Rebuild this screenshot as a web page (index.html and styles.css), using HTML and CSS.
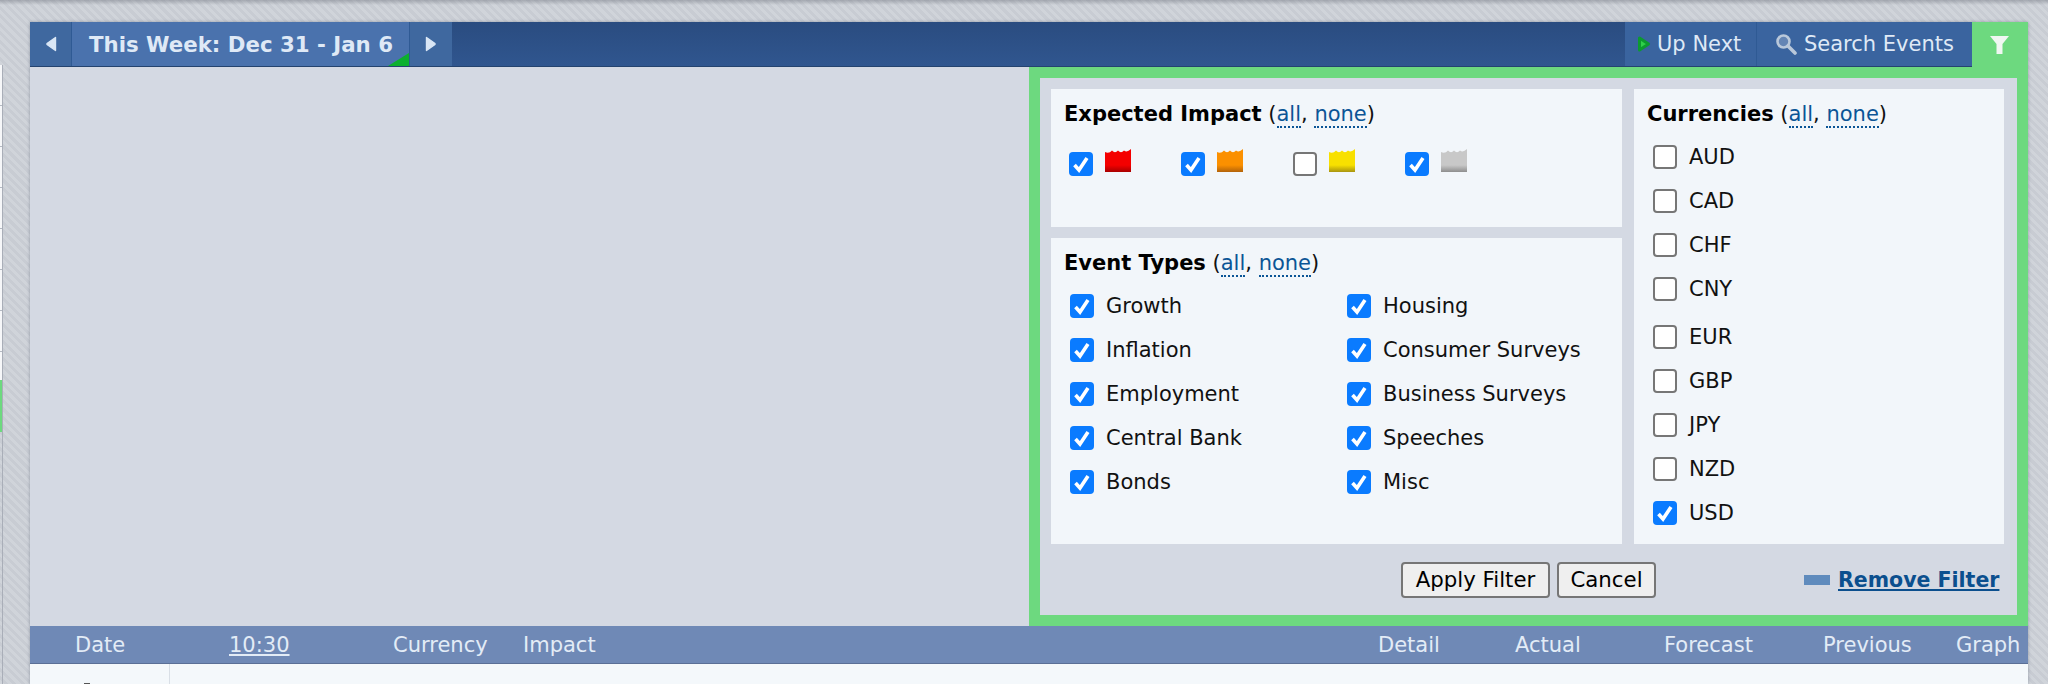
FILE: index.html
```html
<!DOCTYPE html>
<html lang="en">
<head>
    <meta charset="UTF-8">
    <meta name="viewport" content="width=device-width, initial-scale=1.0">
    <title>Calendar</title>
    <link rel="stylesheet" href="styles.css">
</head>
<body>
    <div class="page-edge">
        <span class="edge-green"></span>
    </div>
    <div class="calendar">
        <div class="cal-header">
            <a class="nav-btn nav-prev"><svg width="12" height="16" viewBox="0 0 12 16"><path d="M10.5 1.5v13L2 8.5v-1z" fill="#d9e6f5" stroke="#d9e6f5" stroke-width="1.4" stroke-linejoin="round"/></svg></a>
            <a class="this-week">This Week: Dec 31 - Jan 6<span class="corner"></span></a>
            <a class="nav-btn nav-next"><svg width="12" height="16" viewBox="0 0 12 16"><path d="M1.5 1.5v13L10 8.5v-1z" fill="#d9e6f5" stroke="#d9e6f5" stroke-width="1.4" stroke-linejoin="round"/></svg></a>
            <div class="spacer"></div>
            <a class="head-tab tab-next"><svg width="14" height="16" viewBox="0 0 14 16"><path d="M2.5 2v12l9-6z" fill="#2fd04a" stroke="#0c9a30" stroke-width="3" stroke-linejoin="round"/></svg>Up Next</a>
            <a class="head-tab tab-search"><svg width="22" height="22" viewBox="0 0 22 22"><circle cx="8.5" cy="8.5" r="6" fill="#6485b4" stroke="#b9c8da" stroke-width="2.6"/><path d="M13 13l7 7" stroke="#b9c8da" stroke-width="3.6" stroke-linecap="round"/></svg>Search Events</a>
            <a class="filter-tab"><svg width="20" height="20" viewBox="0 0 20 20"><path d="M0 1h19l-6.5 8v10h-6V9z" fill="#f0f7f2"/></svg></a>
        </div>

        <div class="cal-body">
            <div class="filter-panel">
                <div class="filter-columns">
                    <div class="filter-left">
                        <section class="box box-impact">
                            <h3><b>Expected Impact</b> (<a class="dotted">all</a>, <a class="dotted">none</a>)</h3>
                            <div class="impact-row">
                                <label class="impact-item"><input type="checkbox" checked><span class="folder f-red"></span></label>
                                <label class="impact-item"><input type="checkbox" checked><span class="folder f-orange"></span></label>
                                <label class="impact-item"><input type="checkbox"><span class="folder f-yellow"></span></label>
                                <label class="impact-item"><input type="checkbox" checked><span class="folder f-gray"></span></label>
                            </div>
                        </section>
                        <section class="box box-types">
                            <h3><b>Event Types</b> (<a class="dotted">all</a>, <a class="dotted">none</a>)</h3>
                            <div class="types-grid">
                                <label class="check"><input type="checkbox" checked>Growth</label>
                                <label class="check"><input type="checkbox" checked>Housing</label>
                                <label class="check"><input type="checkbox" checked>Inflation</label>
                                <label class="check"><input type="checkbox" checked>Consumer Surveys</label>
                                <label class="check"><input type="checkbox" checked>Employment</label>
                                <label class="check"><input type="checkbox" checked>Business Surveys</label>
                                <label class="check"><input type="checkbox" checked>Central Bank</label>
                                <label class="check"><input type="checkbox" checked>Speeches</label>
                                <label class="check"><input type="checkbox" checked>Bonds</label>
                                <label class="check"><input type="checkbox" checked>Misc</label>
                            </div>
                        </section>
                    </div>
                    <section class="box box-currencies">
                        <h3><b>Currencies</b> (<a class="dotted">all</a>, <a class="dotted">none</a>)</h3>
                        <div class="cur-list cur-first">
                            <label class="check"><input type="checkbox">AUD</label>
                            <label class="check"><input type="checkbox">CAD</label>
                            <label class="check"><input type="checkbox">CHF</label>
                            <label class="check"><input type="checkbox">CNY</label>
                        </div>
                        <div class="cur-list cur-second">
                            <label class="check"><input type="checkbox">EUR</label>
                            <label class="check"><input type="checkbox">GBP</label>
                            <label class="check"><input type="checkbox">JPY</label>
                            <label class="check"><input type="checkbox">NZD</label>
                            <label class="check"><input type="checkbox" checked>USD</label>
                        </div>
                    </section>
                </div>
                <div class="filter-actions">
                    <button type="button" class="btn-apply">Apply Filter</button>
                    <button type="button" class="btn-cancel">Cancel</button>
                    <span class="remove-icon"></span>
                    <a class="remove-link">Remove Filter</a>
                </div>
            </div>
        </div>

        <div class="col-head">
            <span class="c-date">Date</span>
            <span class="c-time">10:30</span>
            <span class="c-cur">Currency</span>
            <span class="c-imp">Impact</span>
            <span class="c-detail">Detail</span>
            <span class="c-actual">Actual</span>
            <span class="c-forecast">Forecast</span>
            <span class="c-previous">Previous</span>
            <span class="c-graph">Graph</span>
        </div>
        <div class="cal-row">
            <div class="row-date"><span class="row-mark"></span></div>
            <div class="row-rest"></div>
        </div>
    </div>
</body>
</html>
```

FILE: styles.css
```css
* {
    box-sizing: border-box;
}
html, body {
    height: 100%;
}
body {
    margin: 0;
    overflow: hidden;
    font-family: "DejaVu Sans", Verdana, sans-serif;
    font-size: 21px;
    color: #111;
    background: repeating-linear-gradient(45deg, #d0d4da 0, #d0d4da 3px, #c8ccd3 3px, #c8ccd3 6px);
    display: flex;
    flex-direction: column;
    padding: 22px 20px 0 30px;
    position: relative;
}
/* soft shadow along the top of the window */
body::before {
    content: "";
    position: absolute;
    left: 0;
    right: 0;
    top: 0;
    height: 5px;
    background: linear-gradient(rgba(110, 115, 125, 0.45), rgba(110, 115, 125, 0));
}
/* thin rule at the far left */
body::after {
    content: "";
    position: absolute;
    left: 2px;
    top: 65px;
    bottom: 0;
    width: 1px;
    background: #a9aeb8;
}
.page-edge {
    position: absolute;
    left: 0;
    top: 65px;
    width: 2px;
    height: 315px;
    background: repeating-linear-gradient(#f6f7f9 0, #f6f7f9 40px, #b4b9c2 40px, #b4b9c2 41px);
}
.edge-green {
    position: absolute;
    left: 0;
    top: 315px;
    width: 3px;
    height: 52px;
    background: #6dd97f;
}
.calendar {
    flex: 1;
    display: flex;
    flex-direction: column;
    min-height: 0;
    box-shadow: 0 0 3px rgba(90, 100, 120, 0.5);
}

/* header */
.cal-header {
    height: 45px;
    display: flex;
    background: linear-gradient(#2a4c80, #30568f);
    border-bottom: 1px solid #24436f;
    color: #dfe9f6;
}
.nav-btn {
    width: 42px;
    display: flex;
    align-items: center;
    justify-content: center;
    background: #3f689f;
}
.nav-prev {
    border-right: 1px solid #2f5a94;
}
.nav-next {
    width: 43px;
    border-left: 1px solid #2f5a94;
}
.this-week {
    width: 337px;
    background: #4a72ad;
    font-weight: bold;
    font-size: 21.3px;
    line-height: 45px;
    padding-left: 17px;
    position: relative;
    white-space: nowrap;
}
.corner {
    position: absolute;
    right: 0;
    bottom: 0;
    width: 0;
    height: 0;
    border-left: 21px solid transparent;
    border-bottom: 13px solid #0cb02e;
}
.spacer {
    flex: 1;
}
.head-tab {
    display: flex;
    align-items: center;
    background: #3a649f;
    white-space: nowrap;
}
.tab-next {
    width: 132px;
    padding-left: 12px;
    gap: 6px;
    border-right: 1px solid #2f5a94;
}
.tab-search {
    width: 215px;
    padding-left: 18px;
    gap: 7px;
}
.filter-tab {
    width: 56px;
    display: flex;
    align-items: center;
    justify-content: center;
    background: #6dd97f;
    margin-bottom: -1px;
}

/* filter panel */
.cal-body {
    height: 559px;
    background: #d4d9e3;
    display: flex;
    justify-content: flex-end;
}
.filter-panel {
    width: 999px;
    border: 11px solid #6dd97f;
    background: #d4d9e3;
    padding: 11px 12px 0 11px;
    display: flex;
    flex-direction: column;
}
.filter-columns {
    display: flex;
    gap: 12px;
}
.filter-left {
    width: 571px;
    display: flex;
    flex-direction: column;
    gap: 11px;
}
.box {
    background: #f2f6fa;
}
.box h3 {
    margin: 0;
    font-size: 21px;
    font-weight: normal;
    line-height: 24px;
}
.box h3 b {
    color: #000;
}
.dotted {
    color: #0b5596;
    border-bottom: 2px dotted #0b5596;
}
.box-impact {
    height: 138px;
    padding: 13px 13px 0 13px;
}
.impact-row {
    display: flex;
    margin-top: 26px;
    padding-left: 5px;
}
.impact-item {
    width: 112px;
    display: flex;
    align-items: flex-start;
}
.folder {
    width: 26px;
    height: 23px;
    margin-left: 12px;
    margin-top: -3px;
    clip-path: path("M0 3 Q4 5 7 1.5 Q10 5 13 1.5 Q16 5 19 1.5 Q22 4 26 0 V23 H0 Z");
}
.f-red {
    background: linear-gradient(#f40000 70%, #a80000);
}
.f-orange {
    background: linear-gradient(#fb9000 70%, #b3630a);
}
.f-yellow {
    background: linear-gradient(#f8e000 70%, #a89410);
}
.f-gray {
    background: linear-gradient(#c8c8c8 70%, #8e8e8e);
}
.box-types {
    height: 306px;
    padding: 13px 13px 0 13px;
}
.types-grid {
    display: grid;
    grid-template-columns: 277px 1fr;
    margin-top: 9px;
    padding-left: 6px;
}
.check {
    height: 44px;
    display: flex;
    align-items: center;
    white-space: nowrap;
}
input[type="checkbox"] {
    appearance: none;
    width: 24px;
    height: 24px;
    margin: 0 12px 0 0;
    border: 2px solid #767676;
    border-radius: 4px;
    background: #fff;
    flex: none;
}
input[type="checkbox"]:checked {
    border: none;
    background: #0a7bff url("data:image/svg+xml,%3Csvg xmlns='http://www.w3.org/2000/svg' viewBox='0 0 24 24'%3E%3Cpath d='M5.5 13l4.5 5 8-12' fill='none' stroke='%23fff' stroke-width='3.6'/%3E%3C/svg%3E") center no-repeat;
}
.impact-item input[type="checkbox"] {
    margin-right: 0;
}
.box-currencies {
    width: 370px;
    height: 455px;
    padding: 13px 13px 0 13px;
}
.cur-list {
    padding-left: 6px;
}
.cur-first {
    margin-top: 9px;
}
.cur-second {
    margin-top: 4px;
}

/* buttons */
.filter-actions {
    flex: 1;
    display: flex;
    align-items: center;
    padding-left: 350px;
}
.filter-actions button {
    height: 36px;
    font: 21.3px "DejaVu Sans", Verdana, sans-serif;
    color: #000;
    background: #efefef;
    border: 2px solid #767676;
    border-radius: 4px;
    padding: 0;
    margin-right: 7px;
}
.filter-actions .btn-apply {
    width: 149px;
}
.filter-actions .btn-cancel {
    width: 99px;
}
.remove-icon {
    width: 26px;
    height: 10px;
    margin-left: 141px;
    background: #5f8bbd;
}
.remove-link {
    margin-left: 8px;
    font-size: 20.5px;
    font-weight: bold;
    color: #0b4f8e;
    text-decoration: underline;
    white-space: nowrap;
}

/* columns */
.col-head {
    height: 38px;
    background: #6f89b6;
    border-bottom: 1px solid #5a6f96;
    color: #e3ecf6;
    position: relative;
}
.col-head span {
    position: absolute;
    top: 7px;
    white-space: nowrap;
}
.c-date { left: 45px; }
.c-time { left: 199px; text-decoration: underline; }
.c-cur { left: 363px; }
.c-imp { left: 493px; }
.c-detail { left: 1348px; }
.c-actual { left: 1485px; }
.c-forecast { left: 1634px; }
.c-previous { left: 1793px; }
.c-graph { left: 1926px; }
.cal-row {
    flex: 1;
    display: flex;
    background: #f4f8fb;
    overflow: hidden;
}
.row-date {
    width: 140px;
    border-right: 1px solid #d9dfe6;
    display: flex;
    justify-content: center;
    align-items: flex-end;
    padding-right: 26px;
}
.row-mark {
    width: 6px;
    height: 1px;
    background: #555;
}
.row-rest {
    flex: 1;
}
```
